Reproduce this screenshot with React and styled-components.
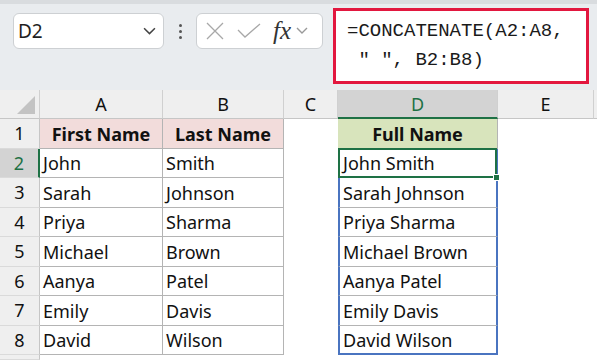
import styled, { createGlobalStyle } from "styled-components";

const GlobalStyle = createGlobalStyle`
    html, body {
        margin: 0;
        padding: 0;
        background: #ffffff;
        overflow: hidden;
    }
    * {
        box-sizing: border-box;
    }
`;

const Page = styled.div`
    width: 597px;
    height: 360px;
    overflow: hidden;
    font-family: "Noto Sans", "Open Sans", sans-serif;
    background: #ffffff;
`;

const Toolbar = styled.div`
    height: 90px;
    background: #e9ecef;
    border-top: 4px solid #d9dcdf;
    display: flex;
    align-items: flex-start;
    padding: 9px 0 0 13px;
    position: relative;
`;

const NameBox = styled.div`
    width: 151px;
    height: 36px;
    background: #ffffff;
    border: 1px solid #cdd0d3;
    border-radius: 6px;
    display: flex;
    align-items: center;
    justify-content: space-between;
    padding: 0 7px 0 4px;
    font-size: 19px;
    color: #1f1f1f;
`;

const Dots = styled.div`
    width: 32px;
    height: 36px;
    display: flex;
    flex-direction: column;
    align-items: center;
    justify-content: center;
    gap: 3px;
    span {
        width: 3px;
        height: 3px;
        background: #555;
        border-radius: 50%;
    }
`;

const FxBox = styled.div`
    width: 127px;
    height: 36px;
    background: #ffffff;
    border: 1px solid #cdd0d3;
    border-radius: 6px;
    display: flex;
    align-items: center;
    padding: 0 3px 0 8px;
    gap: 12px;
`;

const FxLabel = styled.span`
    font-family: "Liberation Serif", serif;
    font-style: italic;
    font-size: 25px;
    color: #333;
    line-height: 1;
    margin-top: -2px;
    margin-right: -7px;
`;

const FormulaBox = styled.div`
    margin-left: 10px;
    margin-top: -5px;
    width: 256px;
    height: 76px;
    background: #ffffff;
    border: 3px solid #e2173f;
    padding: 6px 0 0 11px;
    font-family: "Liberation Mono", "DejaVu Sans Mono", monospace;
    font-size: 19px;
    line-height: 29px;
    color: #1a1a1a;
    white-space: pre;
`;

const Sheet = styled.div`
    display: grid;
    grid-template-columns: 40px 123px 121px 54px 160px 96px 1fr;
    grid-template-rows: 29px repeat(8, 29.5px) 1fr;
    height: 270px;
`;

const ColHead = styled.div`
    background: ${p => (p.$active ? "#d3d3d3" : "#efefef")};
    color: ${p => (p.$active ? "#1e7145" : "#111")};
    border-right: 1px solid #d0d0d0;
    border-bottom: ${p => (p.$active ? "2px solid #1e7145" : "1px solid #c6c6c6")};
    display: flex;
    align-items: center;
    justify-content: center;
    font-size: 18px;
    position: relative;
`;

const Corner = styled(ColHead)`
    &::after {
        content: "";
        position: absolute;
        right: 4px;
        bottom: 4px;
        border-left: 18px solid transparent;
        border-bottom: 18px solid #c3c3c3;
    }
`;

const RowHead = styled.div`
    background: ${p => (p.$active ? "#d3d3d3" : "#efefef")};
    color: ${p => (p.$active ? "#1e7145" : "#111")};
    border-right: ${p => (p.$active ? "2px solid #1e7145" : "1px solid #c6c6c6")};
    border-bottom: 1px solid #dadada;
    display: flex;
    align-items: center;
    justify-content: center;
    font-size: 18px;
`;

const Cell = styled.div`
    background: ${p => p.$bg || "#ffffff"};
    font-weight: ${p => (p.$bold ? 700 : 400)};
    justify-content: ${p => (p.$center ? "center" : "flex-start")};
    border-right: ${p => p.$right || "none"};
    border-bottom: ${p => p.$bottom || "none"};
    border-left: ${p => p.$left || "none"};
    display: flex;
    align-items: center;
    padding: 1px 3px 0;
    font-size: 18px;
    color: #111;
    white-space: nowrap;
    position: relative;
`;

const Selected = styled(Cell)`
    &::after {
        content: "";
        position: absolute;
        left: -2px;
        top: -1px;
        right: -1px;
        bottom: -1px;
        border: 2px solid #1e7145;
    }
`;

const Handle = styled.span`
    position: absolute;
    right: -4px;
    bottom: -4px;
    width: 7px;
    height: 7px;
    background: #1e7145;
    border: 1px solid #ffffff;
    z-index: 2;
`;

const GRAY = "1px solid #b4b4b4";
const BLUE = "2px solid #4a74c0";

const people = [
    ["John", "Smith"],
    ["Sarah", "Johnson"],
    ["Priya", "Sharma"],
    ["Michael", "Brown"],
    ["Aanya", "Patel"],
    ["Emily", "Davis"],
    ["David", "Wilson"],
];

const Chevron = ({ size = 12, color = "#444" }) => (
    <svg width={size} height={size * 0.6} viewBox="0 0 12 7">
        <path d="M1 1 L6 6 L11 1" fill="none" stroke={color} strokeWidth="1.4" />
    </svg>
);

const App = () => (
    <Page>
        <GlobalStyle />
        <Toolbar>
            <NameBox>
                <span>D2</span>
                <Chevron size={13} />
            </NameBox>
            <Dots>
                <span />
                <span />
                <span />
            </Dots>
            <FxBox>
                <svg width="20" height="18" viewBox="0 0 20 18">
                    <path d="M2 1 L18 17 M18 1 L2 17" stroke="#a8a8a8" strokeWidth="1.3" fill="none" />
                </svg>
                <svg width="24" height="16" viewBox="0 0 24 16">
                    <path d="M1 7 L8 14 L23 1" stroke="#a8a8a8" strokeWidth="1.3" fill="none" />
                </svg>
                <FxLabel>fx</FxLabel>
                <Chevron size={12} color="#999" />
            </FxBox>
            <FormulaBox>{'=CONCATENATE(A2:A8,\n " ", B2:B8)'}</FormulaBox>
        </Toolbar>
        <Sheet>
            <Corner />
            <ColHead>A</ColHead>
            <ColHead>B</ColHead>
            <ColHead>C</ColHead>
            <ColHead $active>D</ColHead>
            <ColHead>E</ColHead>
            <ColHead />

            <RowHead>1</RowHead>
            <Cell $bg="#f2dcdb" $bold $center $right={GRAY} $bottom={GRAY}>First Name</Cell>
            <Cell $bg="#f2dcdb" $bold $center $right={GRAY} $bottom={GRAY}>Last Name</Cell>
            <Cell />
            <Cell $bg="#d8e4bc" $bold $center $right={GRAY} $bottom={GRAY}>Full Name</Cell>
            <Cell />
            <Cell />

            {people.map(([first, last], i) => {
                const last_row = i === people.length - 1;
                const FullCell = i === 0 ? Selected : Cell;
                return [
                    <RowHead key={`h${i}`} $active={i === 0}>{i + 2}</RowHead>,
                    <Cell key={`a${i}`} $right={GRAY} $bottom={GRAY}>{first}</Cell>,
                    <Cell key={`b${i}`} $right={GRAY} $bottom={GRAY}>{last}</Cell>,
                    <Cell key={`c${i}`} />,
                    <FullCell key={`d${i}`} $left={BLUE} $right={BLUE} $bottom={last_row ? BLUE : GRAY}>
                        {first} {last}
                        {i === 0 && <Handle />}
                    </FullCell>,
                    <Cell key={`e${i}`} />,
                    <Cell key={`f${i}`} />,
                ];
            })}

            <RowHead />
        </Sheet>
    </Page>
);

export default App;
